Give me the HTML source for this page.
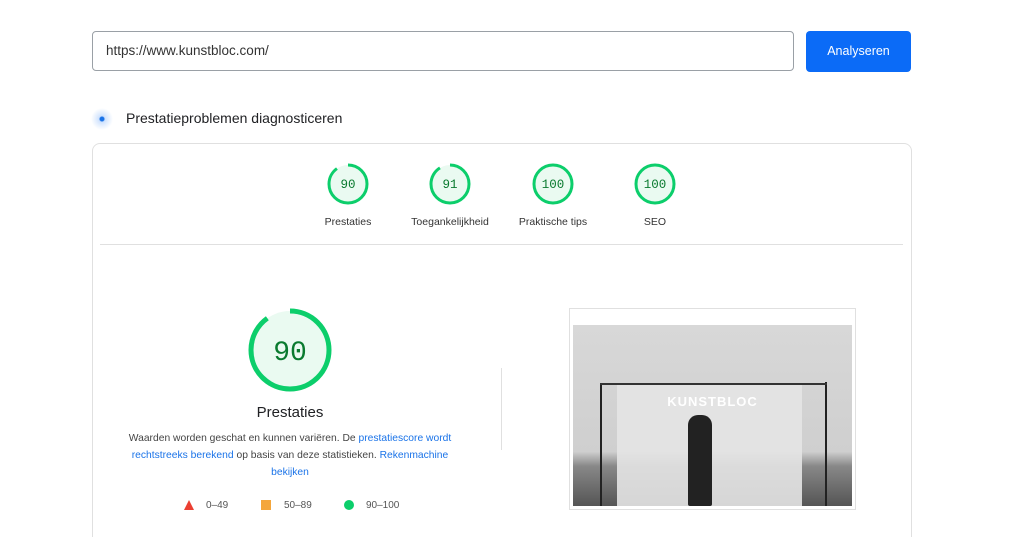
<!DOCTYPE html>
<html style="height:537px;overflow:hidden"><head><meta charset="utf-8"><style>
*{margin:0;padding:0;box-sizing:border-box}
body{width:1024px;height:537px;background:#fff;position:relative;overflow:hidden;font-family:"Liberation Sans",Arial,sans-serif;color:#202124}
.a{position:absolute}
.lbl{position:absolute;font-size:10.5px;color:#333;text-align:center;width:120px}
a{color:#1a73e8;text-decoration:none}
</style></head><body>
<div class="a" style="left:92px;top:31px;width:702px;height:40px;border:1px solid #9aa0a6;border-radius:4px"></div>
<div class="a" style="left:106px;top:43px;font-size:13.5px;color:#333">https://www.kunstbloc.com/</div>
<div class="a" style="left:806px;top:31px;width:105px;height:41px;background:#0b6bf7;border-radius:4px;color:#fff;font-size:12.5px;text-align:center;line-height:41px">Analyseren</div>
<div class="a" style="left:91px;top:108px;width:22px;height:22px;border-radius:50%;background:radial-gradient(circle,#1a73e8 0 2px,#cfe2fd 3px,#e8f1fe 7px,rgba(255,255,255,0) 11px)"></div>
<div class="a" style="left:126px;top:110px;font-size:14px;color:#202124">Prestatieproblemen diagnosticeren</div>
<div class="a" style="left:92px;top:143px;width:820px;height:420px;border:1px solid #e0e0e0;border-radius:8px"></div>
<div class="a" style="left:100px;top:244px;width:803px;height:1px;background:#e0e0e0"></div>
<svg class="a" style="left:0;top:0" width="1024" height="537">
<g fill="#f0fbf4" stroke="#0cce6b" stroke-width="3">
<circle cx="348" cy="184" r="19" fill="#eafaf1" stroke="none"/>
<circle cx="348" cy="184" r="19" fill="none" stroke-dasharray="107.4 119.4" transform="rotate(-90 348 184)"/>
<circle cx="450" cy="184" r="19" fill="#eafaf1" stroke="none"/>
<circle cx="450" cy="184" r="19" fill="none" stroke-dasharray="108.6 119.4" transform="rotate(-90 450 184)"/>
<circle cx="553" cy="184" r="19" fill="#eafaf1"/>
<circle cx="655" cy="184" r="19" fill="#eafaf1"/>
<circle cx="290" cy="350" r="39" fill="#eafaf1" stroke="none"/>
<circle cx="290" cy="350" r="39" fill="none" stroke-width="5" stroke-dasharray="220.5 245" transform="rotate(-90 290 350)"/>
</g>
<g font-family="Liberation Mono,monospace" fill="#0a7a2f" text-anchor="middle">
<text x="348" y="188" font-size="12.5">90</text>
<text x="450" y="188" font-size="12.5">91</text>
<text x="553" y="188" font-size="12.5">100</text>
<text x="655" y="188" font-size="12.5">100</text>
<text x="290" y="360" font-size="28">90</text>
</g>
<polygon points="189,500 194,510 184,510" fill="#eb3f32"/>
<rect x="261" y="500" width="10" height="10" fill="#f4a63b"/>
<circle cx="349" cy="505" r="5" fill="#0cce6b"/>
</svg>
<div class="lbl" style="left:288px;top:216px">Prestaties</div>
<div class="lbl" style="left:390px;top:216px">Toegankelijkheid</div>
<div class="lbl" style="left:493px;top:216px">Praktische tips</div>
<div class="lbl" style="left:595px;top:216px">SEO</div>
<div class="a" style="left:190px;top:404px;width:200px;text-align:center;font-size:15px;color:#202124">Prestaties</div>
<div class="a" style="left:127px;top:430px;width:326px;text-align:center;font-size:10.3px;line-height:17px;color:#444">Waarden worden geschat en kunnen variëren. De <a>prestatiescore wordt rechtstreeks berekend</a> op basis van deze statistieken. <a>Rekenmachine bekijken</a></div>
<div class="a" style="left:206px;top:500px;font-size:10px;color:#555">0–49</div>
<div class="a" style="left:284px;top:500px;font-size:10px;color:#555">50–89</div>
<div class="a" style="left:366px;top:500px;font-size:10px;color:#555">90–100</div>
<div class="a" style="left:501px;top:368px;width:1px;height:82px;background:#e0e0e0"></div>
<div class="a" style="left:569px;top:308px;width:287px;height:202px;border:1px solid #e0e0e0;background:#fff"></div>
<div class="a" style="left:573px;top:325px;width:279px;height:181px;background:linear-gradient(#d8d8d8,#cfcfcf 70%,#888 78%,#555)"></div>
<div class="a" style="left:617px;top:384px;width:185px;height:122px;background:#e4e4e4;opacity:.9"></div>
<div class="a" style="left:600px;top:384px;width:2px;height:122px;background:#222"></div>
<div class="a" style="left:825px;top:382px;width:2px;height:124px;background:#222"></div>
<div class="a" style="left:600px;top:383px;width:227px;height:2px;background:#333"></div>
<div class="a" style="left:573px;top:394px;width:279px;text-align:center;color:#fff;font-size:13px;font-weight:bold;letter-spacing:1px">KUNSTBLOC</div>
<div class="a" style="left:688px;top:415px;width:24px;height:91px;background:#222;border-radius:10px 10px 2px 2px"></div>
</body></html>
